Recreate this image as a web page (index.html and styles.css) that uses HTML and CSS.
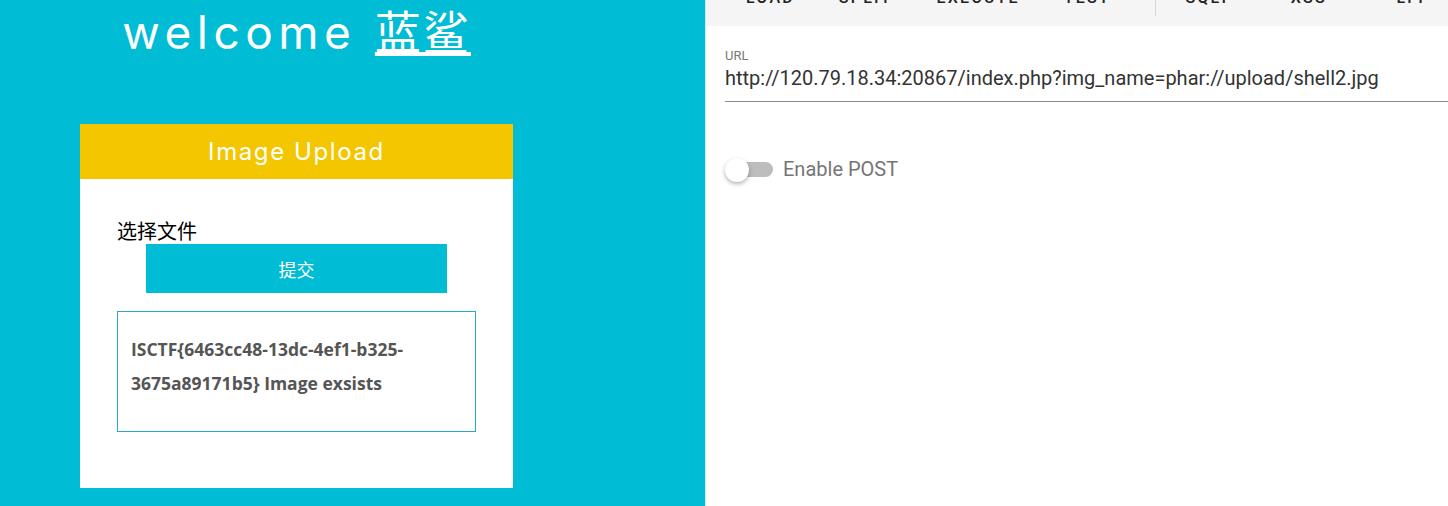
FILE: index.html
```html
<!DOCTYPE html>
<html lang="zh">
<head>
    <meta charset="UTF-8">
    <meta name="viewport" content="width=device-width, initial-scale=1.0">
    <title>Image Upload</title>
    <link rel="stylesheet" href="styles.css">
</head>
<body>

    <!-- Левая часть: страница с загрузкой -->
    <div class="site">
        <div class="column">
            <h1 class="title">welcome <a href="#">蓝鲨</a></h1>

            <div class="card">
                <div class="card-head">Image Upload</div>
                <div class="card-body">
                    <div class="file-label">选择文件</div>
                    <button class="submit">提交</button>
                    <div class="result">ISCTF{6463cc48-13dc-4ef1-b325-3675a89171b5} Image exsists</div>
                </div>
            </div>
        </div>
    </div>

    <!-- Правая часть: панель HackBar -->
    <div class="hackbar">
        <div class="toolbar">
            <span class="tool">LOAD</span>
            <span class="tool">SPLIT</span>
            <span class="tool">EXECUTE</span>
            <span class="tool">TEST</span>
            <span class="divider"></span>
            <span class="tool wide">SQLI</span>
            <span class="tool wide">XSS</span>
            <span class="tool wide">LFI</span>
        </div>

        <div class="field">
            <div class="field-label">URL</div>
            <div class="field-value">http://120.79.18.34:20867/index.php?img_name=phar://upload/shell2.jpg</div>
        </div>

        <div class="switch-row">
            <span class="switch"><span class="thumb"></span></span>
            <span class="switch-text">Enable POST</span>
        </div>
    </div>

</body>
</html>
```

FILE: styles.css
```css
body {
    margin: 0;
    height: 506px;
    display: flex;
    overflow: hidden;
    font-family: Roboto, Arial, sans-serif;
}

/* Левая часть */
.site {
    width: 705px;
    flex: none;
    background-color: #00bcd4;
    padding-left: 80px;
    box-sizing: border-box;
}

.column {
    width: 433px;
}

.title {
    margin: 0;
    height: 124px;
    font-family: Inter, "Noto Sans CJK SC", sans-serif;
    font-weight: 400;
    font-size: 46px;
    letter-spacing: 5.5px;
    line-height: 58px;
    text-align: center;
    color: white;
}

.title a {
    color: white;
    font-family: "Noto Sans CJK SC", sans-serif;
    font-weight: 400;
    font-size: 46px;
    letter-spacing: 2px;
}

.card {
    background: white;
}

.card-head {
    height: 55px;
    line-height: 56px;
    background-color: #f3c600;
    color: white;
    text-align: center;
    font-family: Inter, sans-serif;
    font-weight: 400;
    font-size: 24px;
    letter-spacing: 1.6px;
}

.card-body {
    padding: 40px 37px 56px 37px;
}

.file-label {
    font-family: "Noto Sans CJK SC", sans-serif;
    font-size: 20px;
    line-height: 24px;
    color: black;
}

.submit {
    display: block;
    width: 301px;
    height: 49px;
    margin: 1px auto 18px auto;
    border: none;
    background-color: #00bcd4;
    color: white;
    font-family: "Noto Sans CJK SC", sans-serif;
    font-size: 18px;
}

.result {
    border: 1px solid #2aa9c2;
    padding: 20px 13px 31px 13px;
    font-family: "Open Sans", sans-serif;
    font-weight: 700;
    font-size: 17.5px;
    line-height: 34px;
    color: #555;
}

/* Правая часть */
.hackbar {
    flex: 1;
    background: white;
    border-left: 1px solid #c8f0f6;
}

.toolbar {
    height: 26px;
    background-color: #f5f5f5;
    display: flex;
    padding-left: 18px;
    overflow: hidden;
}

.tool {
    margin-top: -12px;
    height: 20px;
    padding: 0 22px;
    line-height: 20px;
    font-size: 16px;
    font-weight: 500;
    letter-spacing: 2.2px;
    color: #222;
}

.divider {
    width: 1px;
    height: 16px;
    background: #d6d6d6;
    margin-left: 22px;
}

.tool.wide {
    width: 102px;
    padding: 0;
    text-align: center;
}

.field {
    padding: 22px 0 0 19px;
}

.field-label {
    font-size: 13px;
    line-height: 16px;
    color: #777;
}

.field-value {
    font-size: 20px;
    line-height: 28px;
    color: #333;
    padding-bottom: 9px;
    border-bottom: 1px solid #8c8c8c;
}

.switch-row {
    display: flex;
    align-items: center;
    gap: 10px;
    padding: 55px 0 0 21px;
}

.switch {
    position: relative;
    width: 46px;
    height: 15px;
    border-radius: 8px;
    background-color: #bdbdbd;
}

.thumb {
    position: absolute;
    left: -2px;
    top: -4px;
    width: 24px;
    height: 24px;
    border-radius: 50%;
    background: white;
    box-shadow: 0 2px 4px rgba(0, 0, 0, 0.3);
}

.switch-text {
    font-size: 20px;
    color: #757575;
}
```
